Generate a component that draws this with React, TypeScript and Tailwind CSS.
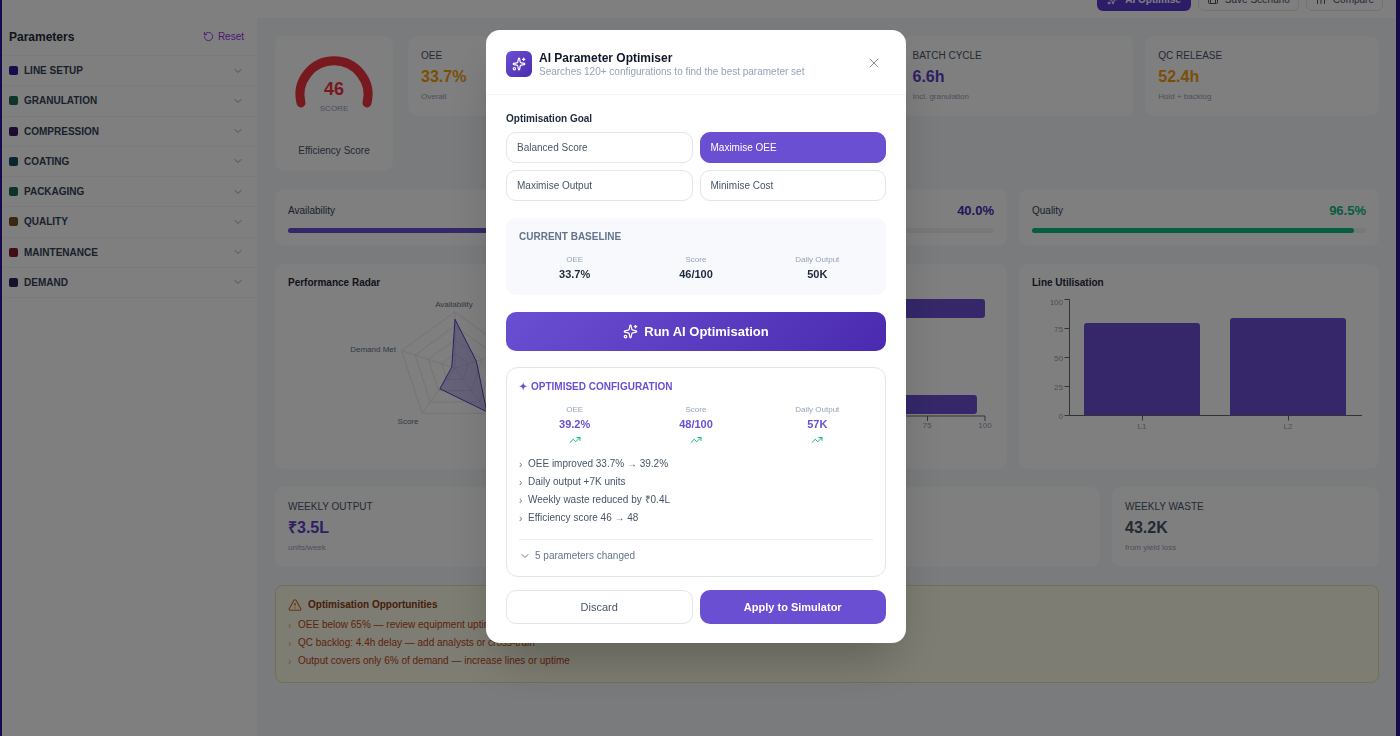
import { useState } from "react";
import {
  ChartNoAxesColumn,
  ChevronDown,
  RotateCcw,
  Save,
  Sparkles,
  TrendingUp,
  TriangleAlert,
  X,
} from "lucide-react";

const sections = [
  { name: "LINE SETUP", color: "bg-[#2a1a9c]" },
  { name: "GRANULATION", color: "bg-[#1d6b4a]" },
  { name: "COMPRESSION", color: "bg-[#3a1768]" },
  { name: "COATING", color: "bg-[#164a63]" },
  { name: "PACKAGING", color: "bg-[#1a6b4c]" },
  { name: "QUALITY", color: "bg-[#75521f]" },
  { name: "MAINTENANCE", color: "bg-[#7f1d2d]" },
  { name: "DEMAND", color: "bg-[#2b2459]" },
];

const kpis = [
  { label: "OEE", value: "33.7%", note: "Overall", tone: "text-[#f59e0b]" },
  { label: "DAILY OUTPUT", value: "50K", note: "units/day", tone: "text-[#5b3fc8]" },
  { label: "BATCH CYCLE", value: "6.6h", note: "Incl. granulation", tone: "text-[#5b3fc8]" },
  { label: "QC RELEASE", value: "52.4h", note: "Hold + backlog", tone: "text-[#f59e0b]" },
];

const weekly = [
  { label: "WEEKLY OUTPUT", value: "₹3.5L", note: "units/week", tone: "text-[#5b3fc8]" },
  { label: "BATCHES", value: "7", note: "per week", tone: "text-[#475569]" },
  { label: "COST", value: "₹1.2", note: "per unit", tone: "text-[#475569]" },
  { label: "WEEKLY WASTE", value: "43.2K", note: "from yield loss", tone: "text-[#475569]" },
];

const factors = [
  { label: "Availability", value: 87.3, text: "text-[#4a2bb0]", bar: "bg-[#6b4fd3]" },
  { label: "Performance", value: 40.0, text: "text-[#4a2bb0]", bar: "bg-[#6b4fd3]" },
  { label: "Quality", value: 96.5, text: "text-[#10b981]", bar: "bg-[#10b981]" },
];

const opportunities = [
  "OEE below 65% — review equipment uptime",
  "QC backlog: 4.4h delay — add analysts or cross-train",
  "Output covers only 6% of demand — increase lines or uptime",
];

const goals = ["Balanced Score", "Maximise OEE", "Maximise Output", "Minimise Cost"];

const baseline = [
  { label: "OEE", value: "33.7%" },
  { label: "Score", value: "46/100" },
  { label: "Daily Output", value: "50K" },
];

const optimised = [
  { label: "OEE", value: "39.2%" },
  { label: "Score", value: "48/100" },
  { label: "Daily Output", value: "57K" },
];

const improvements = [
  "OEE improved 33.7% → 39.2%",
  "Daily output +7K units",
  "Weekly waste reduced by ₹0.4L",
  "Efficiency score 46 → 48",
];

const card = "rounded-lg border border-[#fbfcfd] bg-white p-3";

function StatCard({ label, value, note, tone }: { label: string; value: string; note: string; tone: string }) {
  return (
    <div className={card}>
      <div className="text-[10px] leading-[14px] text-[#475569]">{label}</div>
      <div className={`mt-1 text-[16px] leading-5 font-bold ${tone}`}>{value}</div>
      <div className="mt-1 text-[8px] leading-3 text-[#94a3b8]">{note}</div>
    </div>
  );
}

function ScoreGauge() {
  return (
    <svg viewBox="0 0 92 95" className="h-[95px] w-[92px]">
      <path d="M13 54 A34 34 0 1 1 79 54" fill="none" stroke="#f0323e" strokeWidth="9" strokeLinecap="round" />
      <text x="46" y="46" textAnchor="middle" className="fill-[#f0323e] text-[18px] font-bold">46</text>
      <text x="46" y="62" textAnchor="middle" className="fill-[#94a3b8] text-[8px]">SCORE</text>
    </svg>
  );
}

// Vertices of the radar pentagon, clockwise from the top
function radarPoints(values: number[]) {
  return values
    .map((v, i) => {
      const angle = (i * 2 * Math.PI) / values.length;
      const r = (56 * v) / 100;
      return `${(167 + r * Math.sin(angle)).toFixed(1)},${(75 - r * Math.cos(angle)).toFixed(1)}`;
    })
    .join(" ");
}

function RadarChart() {
  const corners = radarPoints([100, 100, 100, 100, 100]).split(" ");
  return (
    <svg viewBox="0 0 334 163" className="mt-1 w-full">
      {[25, 50, 75, 100].map((v) => (
        <polygon key={v} points={radarPoints([v, v, v, v, v])} fill="none" stroke="#e6e8ec" />
      ))}
      {corners.map((c) => (
        <line key={c} x1="167" y1="75" x2={c.split(",")[0]} y2={c.split(",")[1]} stroke="#e6e8ec" />
      ))}
      <polygon points={radarPoints([87, 40, 96.5, 46, 6])} fill="#6b4fd3" fillOpacity="0.35" stroke="#5b3fc8" />
      <g className="fill-[#64748b] text-[8px]">
        <text x="166" y="14" textAnchor="middle">Availability</text>
        <text x="108" y="59" textAnchor="end">Demand Met</text>
        <text x="120" y="131" textAnchor="middle">Score</text>
      </g>
    </svg>
  );
}

function StageChart() {
  const bars = [100, 42, 35, 50, 96.5];
  return (
    <svg viewBox="0 0 334 163" className="mt-1 w-full">
      {bars.map((v, i) => (
        <rect key={i} x="95" y={6 + i * 24} width={v * 2.3} height="19" rx="3" fill="#6b4fd3" />
      ))}
      <path d="M95 123H325M95 123v5M152.500 123v5M210 123v5M267.500 123v5M325 123v5" fill="none" stroke="#666" />
      <g className="fill-[#94a3b8] text-[8px]" textAnchor="middle">
        <text x="95" y="135">0</text>
        <text x="152" y="135">25</text>
        <text x="210" y="135">50</text>
        <text x="267" y="135">75</text>
        <text x="325" y="135">100</text>
      </g>
    </svg>
  );
}

function LineChart() {
  return (
    <svg viewBox="0 0 334 163" className="mt-1 w-full">
      <path d="M52 123V33a3 3 0 0 1 3-3H165a3 3 0 0 1 3 3V123Z" fill="#6b4fd3" />
      <path d="M198 123V28a3 3 0 0 1 3-3H311a3 3 0 0 1 3 3V123Z" fill="#6b4fd3" />
      <path
        d="M32.500 6.500H37.500V122.500H330M32.500 35.500h5M32.500 64.500h5M32.500 93.500h5M32.500 122.500h5M110.500 122.500v5M256.500 122.500v5"
        fill="none"
        stroke="#666"
      />
      <g className="fill-[#94a3b8] text-[8px]" textAnchor="end">
        <text x="31" y="12">100</text>
        <text x="31" y="39">75</text>
        <text x="31" y="68">50</text>
        <text x="31" y="97">25</text>
        <text x="31" y="126">0</text>
      </g>
      <g className="fill-[#94a3b8] text-[8px]" textAnchor="middle">
        <text x="110" y="136">L1</text>
        <text x="256" y="136">L2</text>
      </g>
    </svg>
  );
}

function Metrics({ items, improved }: { items: { label: string; value: string }[]; improved?: boolean }) {
  return (
    <div className="grid grid-cols-3 gap-[10px] text-center">
      {items.map((item) => (
        <div key={item.label}>
          <div className="text-[8px] leading-3 text-[#94a3b8]">{item.label}</div>
          <div className={`text-[11px] leading-4 font-bold ${improved ? "text-[#6b4fd3]" : "text-[#1e293b]"}`}>
            {item.value}
          </div>
          {improved && <TrendingUp className="mx-auto mt-[2px] size-3 text-[#10b981]" />}
        </div>
      ))}
    </div>
  );
}

function OptimiserDialog() {
  const [goal, setGoal] = useState("Maximise OEE");

  return (
    <div className="fixed inset-0 flex items-start justify-center overflow-auto bg-black/50 pt-[30px] pr-2">
      <div
        role="dialog"
        aria-labelledby="optimiser-title"
        className="w-[420px] max-w-full rounded-[14px] bg-white shadow-2xl"
      >
        <div className="flex items-start gap-[7px] border-b border-[#f3f4f6] px-5 pt-[21px] pb-[15px]">
          <div className="flex size-[26px] items-center justify-center rounded-md bg-[linear-gradient(135deg,#6b4fd3,#4a2bb0)]">
            <Sparkles className="size-[14px] text-white" />
          </div>
          <div className="flex-1">
            <h2 id="optimiser-title" className="text-[12px] leading-[14px] font-bold text-[#0f172a]">
              AI Parameter Optimiser
            </h2>
            <p className="text-[10px] leading-[14px] text-[#94a3b8]">
              Searches 120+ configurations to find the best parameter set
            </p>
          </div>
          <button aria-label="Close" className="flex size-6 items-center justify-center text-[#8a919e]">
            <X className="size-4" strokeWidth={1.5} />
          </button>
        </div>

        <div className="px-5 pt-[18px] pb-[19px]">
          <h3 className="text-[10px] leading-3 font-bold text-[#1e293b]">Optimisation Goal</h3>
          <div className="mt-[7px] grid grid-cols-2 gap-[7px]">
            {goals.map((g) => (
              <button
                key={g}
                aria-pressed={g === goal}
                onClick={() => setGoal(g)}
                className={
                  g === goal
                    ? "h-[31px] rounded-[10px] border border-[#6b4fd3] bg-[#6b4fd3] px-[10px] text-left text-[10px] text-white"
                    : "h-[31px] rounded-[10px] border border-[#e2e4ee] bg-white px-[10px] text-left text-[10px] text-[#475569]"
                }
              >
                {g}
              </button>
            ))}
          </div>

          <div className="mt-[17px] rounded-[10px] bg-[#f8f9fd] p-[13px]">
            <h3 className="mb-[11px] text-[10px] leading-3 font-bold text-[#64748b]">CURRENT BASELINE</h3>
            <Metrics items={baseline} />
          </div>

          <button className="mt-[17px] flex h-[39px] w-full items-center justify-center gap-[6px] rounded-[10px] bg-[linear-gradient(135deg,#6b4fd3,#4a2bb0)] text-[13px] font-bold text-white">
            <Sparkles className="size-[15px]" />
            Run AI Optimisation
          </button>

          <div className="mt-4 rounded-xl border border-[#e2e4ea] p-3">
            <h3 className="mb-[10px] flex gap-1 text-[10px] leading-[14px] font-bold text-[#6b4fd3]">
              <span>✦</span>
              OPTIMISED CONFIGURATION
            </h3>
            <Metrics items={optimised} improved />
            <ul className="mt-[9px] text-[10px] leading-[18px] text-[#475569]">
              {improvements.map((line) => (
                <li key={line} className="flex gap-[6px]">
                  <span className="w-[3px] pt-[2px] leading-4 text-[#64748b]">›</span>
                  {line}
                </li>
              ))}
            </ul>
            <div className="mt-3 border-t border-[#eceef3] pt-2">
              <button className="flex items-center gap-1 text-[10px] leading-4 text-[#64748b]">
                <ChevronDown className="size-3" />
                5 parameters changed
              </button>
            </div>
          </div>

          <div className="mt-[13px] grid grid-cols-2 gap-[7px]">
            <button className="h-[34px] rounded-[10px] border border-[#e2e4ea] text-[11px] text-[#475569]">
              Discard
            </button>
            <button className="h-[34px] rounded-[10px] bg-[#6b4fd3] text-[11px] font-bold text-white">
              Apply to Simulator
            </button>
          </div>
        </div>
      </div>
    </div>
  );
}

export default function App() {
  return (
    <div className="min-h-screen bg-[#2c1494] pr-1 pl-[2px] font-['Liberation_Sans',Arial,sans-serif]">
      <div className="flex min-h-screen flex-col bg-[#f5f7fa]">
        {/* Toolbar, scrolled almost out of view */}
        <header className="flex h-[18px] items-end justify-end gap-[7px] overflow-hidden bg-white pr-[13px] pb-[7px] text-[10px]">
          <button className="flex h-6 shrink-0 items-center gap-[6px] rounded-md bg-[#5a3ad0] px-[10px] font-bold text-white">
            <Sparkles className="size-3" />
            AI Optimise
          </button>
          <button className="flex h-6 shrink-0 items-center gap-[6px] rounded-md border border-[#e5e7eb] px-2 text-[#475569]">
            <Save className="size-3" />
            Save Scenario
          </button>
          <button className="flex h-6 shrink-0 items-center gap-[6px] rounded-md border border-[#e5e7eb] px-2 text-[#475569]">
            <ChartNoAxesColumn className="size-3" />
            Compare
          </button>
        </header>

        <div className="flex flex-1">
          {/* Parameters */}
          <aside className="w-[255px] shrink-0 bg-white">
            <div className="flex h-[38px] items-center justify-between border-b border-[#f3f4f6] pr-[13px] pl-[7px]">
              <h2 className="text-[12px] font-bold text-[#1e293b]">Parameters</h2>
              <button className="flex items-center gap-1 text-[10px] text-[#9333ea]">
                <RotateCcw className="size-[11px]" />
                Reset
              </button>
            </div>
            <div className="grid h-[242px] auto-rows-fr">
              {sections.map((s) => (
                <button
                  key={s.name}
                  className="flex items-center gap-[6px] border-b border-[#f3f4f6] pr-[13px] pl-[7px] text-[10px] font-bold text-[#334155]"
                >
                  <span className={`size-[9px] rounded-xs ${s.color}`} />
                  {s.name}
                  <ChevronDown className="ml-auto size-3 text-[#94a3b8]" />
                </button>
              ))}
            </div>
          </aside>

          {/* Dashboard */}
          <main className="flex min-w-0 flex-1 flex-col gap-[18px] pt-[18px] pr-[17px] pl-[18px]">
            <div className="flex items-start gap-[15px]">
              <div className={`flex w-[118px] shrink-0 flex-col items-center ${card}`}>
                <ScoreGauge />
                <div className="text-[10px] leading-[14px] text-[#475569]">Efficiency Score</div>
              </div>
              <div className="grid flex-1 grid-cols-4 gap-3">
                {kpis.map((k) => (
                  <StatCard key={k.label} {...k} />
                ))}
              </div>
            </div>

            <div className="grid grid-cols-3 gap-3">
              {factors.map((f) => (
                <div key={f.label} className={card}>
                  <div className="flex items-center justify-between leading-[18px]">
                    <span className="text-[10px] text-[#334155]">{f.label}</span>
                    <span className={`text-[13px] font-bold ${f.text}`}>{f.value.toFixed(1)}%</span>
                  </div>
                  <div className="mt-2 h-[5px] rounded-full bg-[#eef0f4]">
                    <div className={`h-full rounded-full ${f.bar}`} style={{ width: `${f.value}%` }} />
                  </div>
                </div>
              ))}
            </div>

            <div className="grid grid-cols-3 gap-3">
              <div className={card}>
                <h3 className="text-[10px] leading-3 font-bold text-[#1e293b]">Performance Radar</h3>
                <RadarChart />
              </div>
              <div className={card}>
                <h3 className="text-[10px] leading-3 font-bold text-[#1e293b]">Stage Efficiency</h3>
                <StageChart />
              </div>
              <div className={card}>
                <h3 className="text-[10px] leading-3 font-bold text-[#1e293b]">Line Utilisation</h3>
                <LineChart />
              </div>
            </div>

            <div className="grid grid-cols-4 gap-3">
              {weekly.map((w) => (
                <StatCard key={w.label} {...w} />
              ))}
            </div>

            <div className="rounded-lg border border-[#eadf9e] bg-[#fdfbe6] p-3">
              <h3 className="flex items-center gap-[6px] text-[10px] leading-3 font-bold text-[#8a3a14]">
                <TriangleAlert className="size-[14px] text-[#d9691e]" />
                Optimisation Opportunities
              </h3>
              <ul className="mt-1 text-[10px] leading-[18px] text-[#b8451a]">
                {opportunities.map((line) => (
                  <li key={line} className="flex gap-[6px]">
                    <span className="w-1 pt-[2px] leading-4 text-[#d8a860]">›</span>
                    {line}
                  </li>
                ))}
              </ul>
            </div>
          </main>
        </div>
      </div>

      <OptimiserDialog />
    </div>
  );
}
